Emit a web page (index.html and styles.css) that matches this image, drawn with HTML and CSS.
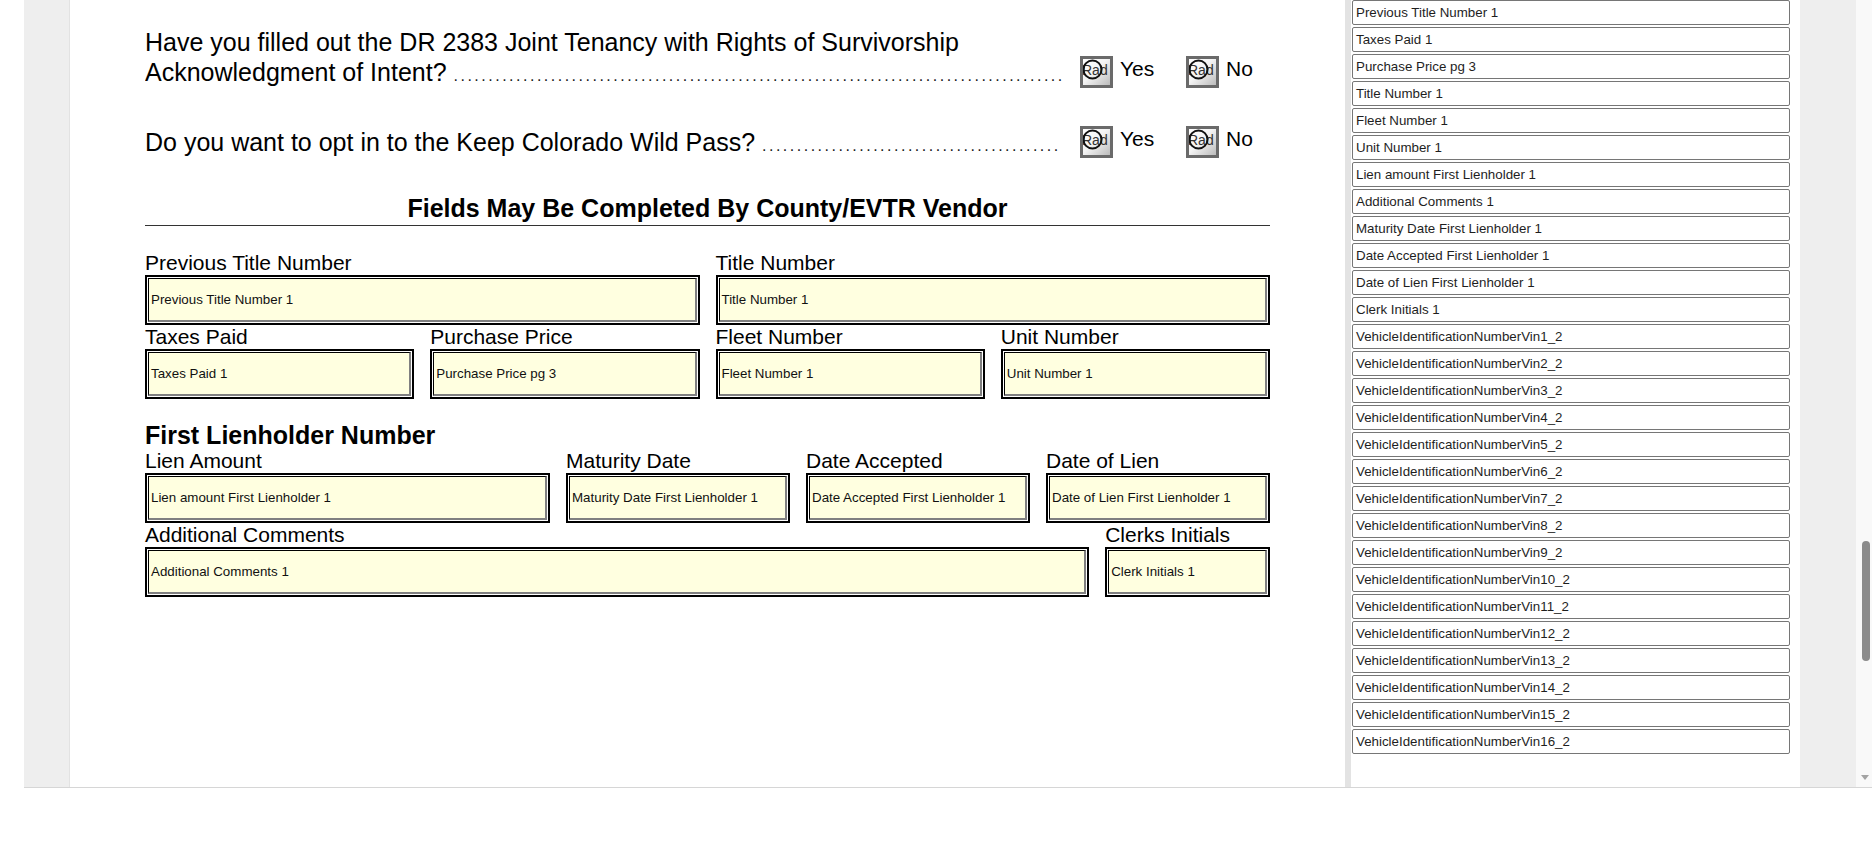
FILE: index.html
```html
<!DOCTYPE html>
<html>
<head>
<meta charset="utf-8">
<title>DR 2395 form</title>
<link rel="stylesheet" href="styles.css">
</head>
<body>
<div class="viewer">
  <div class="gutter-left"></div>
  <main class="page">
    <div class="question">
      <div class="q-text">
        <div class="q-line">Have you filled out the DR 2383 Joint Tenancy with Rights of Survivorship</div>
        <div class="q-line">Acknowledgment of Intent? <span class="dots">........................................................................................</span></div>
      </div>
      <div class="radios">
        <div class="opt"><div class="radio"><svg class="radio-ring" width="26" height="26" viewBox="0 0 26 26"><circle cx="9.5" cy="10.5" r="9" fill="none" stroke="#111" stroke-width="2"/></svg><span class="rad">Rad</span></div><span class="opt-label">Yes</span></div>
        <div class="opt"><div class="radio"><svg class="radio-ring" width="26" height="26" viewBox="0 0 26 26"><circle cx="9.5" cy="10.5" r="9" fill="none" stroke="#111" stroke-width="2"/></svg><span class="rad">Rad</span></div><span class="opt-label">No</span></div>
      </div>
    </div>

    <div class="question q2">
      <div class="q-text">
        <div class="q-line">Do you want to opt in to the Keep Colorado Wild Pass? <span class="dots">...........................................</span></div>
      </div>
      <div class="radios">
        <div class="opt"><div class="radio"><svg class="radio-ring" width="26" height="26" viewBox="0 0 26 26"><circle cx="9.5" cy="10.5" r="9" fill="none" stroke="#111" stroke-width="2"/></svg><span class="rad">Rad</span></div><span class="opt-label">Yes</span></div>
        <div class="opt"><div class="radio"><svg class="radio-ring" width="26" height="26" viewBox="0 0 26 26"><circle cx="9.5" cy="10.5" r="9" fill="none" stroke="#111" stroke-width="2"/></svg><span class="rad">Rad</span></div><span class="opt-label">No</span></div>
      </div>
    </div>

    <h2 class="section-title">Fields May Be Completed By County/EVTR Vendor</h2>

    <div class="row row-first grid-4">
      <div class="fld span-2"><div class="lbl">Previous Title Number</div><div class="box"><div class="box-in">Previous Title Number 1</div></div></div>
      <div class="fld span-2"><div class="lbl">Title Number</div><div class="box"><div class="box-in">Title Number 1</div></div></div>
    </div>
    <div class="row grid-4">
      <div class="fld"><div class="lbl">Taxes Paid</div><div class="box"><div class="box-in">Taxes Paid 1</div></div></div>
      <div class="fld"><div class="lbl">Purchase Price</div><div class="box"><div class="box-in">Purchase Price pg 3</div></div></div>
      <div class="fld"><div class="lbl">Fleet Number</div><div class="box"><div class="box-in">Fleet Number 1</div></div></div>
      <div class="fld"><div class="lbl">Unit Number</div><div class="box"><div class="box-in">Unit Number 1</div></div></div>
    </div>

    <h3 class="sub-title">First Lienholder Number</h3>
    <div class="row grid-lien">
      <div class="fld"><div class="lbl">Lien Amount</div><div class="box"><div class="box-in">Lien amount First Lienholder 1</div></div></div>
      <div class="fld"><div class="lbl">Maturity Date</div><div class="box"><div class="box-in">Maturity Date First Lienholder 1</div></div></div>
      <div class="fld"><div class="lbl">Date Accepted</div><div class="box"><div class="box-in">Date Accepted First Lienholder 1</div></div></div>
      <div class="fld"><div class="lbl">Date of Lien</div><div class="box"><div class="box-in">Date of Lien First Lienholder 1</div></div></div>
    </div>
    <div class="row grid-comments">
      <div class="fld"><div class="lbl">Additional Comments</div><div class="box"><div class="box-in">Additional Comments 1</div></div></div>
      <div class="fld"><div class="lbl">Clerks Initials</div><div class="box"><div class="box-in">Clerk Initials 1</div></div></div>
    </div>
  </main>

  <aside class="sidebar">
    <div class="item">Previous Title Number 1</div>
    <div class="item">Taxes Paid 1</div>
    <div class="item">Purchase Price pg 3</div>
    <div class="item">Title Number 1</div>
    <div class="item">Fleet Number 1</div>
    <div class="item">Unit Number 1</div>
    <div class="item">Lien amount First Lienholder 1</div>
    <div class="item">Additional Comments 1</div>
    <div class="item">Maturity Date First Lienholder 1</div>
    <div class="item">Date Accepted First Lienholder 1</div>
    <div class="item">Date of Lien First Lienholder 1</div>
    <div class="item">Clerk Initials 1</div>
    <div class="item">VehicleIdentificationNumberVin1_2</div>
    <div class="item">VehicleIdentificationNumberVin2_2</div>
    <div class="item">VehicleIdentificationNumberVin3_2</div>
    <div class="item">VehicleIdentificationNumberVin4_2</div>
    <div class="item">VehicleIdentificationNumberVin5_2</div>
    <div class="item">VehicleIdentificationNumberVin6_2</div>
    <div class="item">VehicleIdentificationNumberVin7_2</div>
    <div class="item">VehicleIdentificationNumberVin8_2</div>
    <div class="item">VehicleIdentificationNumberVin9_2</div>
    <div class="item">VehicleIdentificationNumberVin10_2</div>
    <div class="item">VehicleIdentificationNumberVin11_2</div>
    <div class="item">VehicleIdentificationNumberVin12_2</div>
    <div class="item">VehicleIdentificationNumberVin13_2</div>
    <div class="item">VehicleIdentificationNumberVin14_2</div>
    <div class="item">VehicleIdentificationNumberVin15_2</div>
    <div class="item">VehicleIdentificationNumberVin16_2</div>
  </aside>

  <div class="gutter-right"></div>

  <div class="scrollbar">
    <div class="thumb"></div>
    <div class="arrow-down"></div>
  </div>
</div>
</body>
</html>
```

FILE: styles.css
```css
html, body {
  margin: 0;
  padding: 0;
  background: #ffffff;
}

body {
  font-family: "Liberation Sans", Arial, sans-serif;
  color: #000;
  overflow: hidden;
}

.viewer {
  display: flex;
  margin-left: 24px;
  height: 787px;
  border-bottom: 1px solid #d6d6d6;
  overflow: hidden;
}

.gutter-left {
  width: 45px;
  flex: none;
  background: #eeeeee;
  border-right: 1px solid #e2e2e2;
}

.page {
  width: 1125px;
  flex: none;
  background: #fff;
  padding: 27px 75px 0 75px;
}

/* Questions */
.question {
  display: flex;
  align-items: flex-end;
}

.q2 {
  margin-top: 39px;
}

.q-text {
  width: 923px;
  flex: none;
}

.q-line {
  height: 30px;
  font-size: 25px;
  line-height: 30px;
  white-space: nowrap;
  overflow: hidden;
}

.dots {
  font-size: 16px;
  line-height: 16px;
  letter-spacing: 2.5px;
  color: #1a1a1a;
}

.radios {
  display: flex;
  margin-left: 12px;
  margin-bottom: -1px;
}

.opt {
  display: flex;
  align-items: center;
  width: 106px;
}

.opt:last-child {
  width: auto;
}

.radio {
  position: relative;
  width: 33px;
  height: 32px;
  box-sizing: border-box;
  border: 3px solid #6a6a6a;
  background: linear-gradient(135deg, #ffffff 0%, #f4f4f4 45%, #bcbcbc 100%);
  overflow: hidden;
  flex: none;
}

.radio-ring {
  position: absolute;
  left: 0;
  top: 0;
}

.rad {
  display: block;
  font-size: 14px;
  line-height: 14px;
  color: #333;
  padding-top: 4px;
  margin-left: -1px;
  white-space: nowrap;
}

.opt-label {
  font-size: 21px;
  line-height: 24px;
  margin-left: 7px;
  margin-top: -6px;
}

/* Headings */
.section-title {
  margin: 36px 0 0 0;
  padding-bottom: 2px;
  font-size: 25px;
  line-height: 30px;
  font-weight: bold;
  text-align: center;
  border-bottom: 1px solid #333;
}

.sub-title {
  margin: 22px 0 0 0;
  font-size: 25px;
  line-height: 28px;
  font-weight: bold;
}

/* Field rows */
.row {
  display: grid;
  column-gap: 16px;
}

.row-first {
  margin-top: 25px;
}

.grid-4 {
  grid-template-columns: repeat(4, 1fr);
}

.span-2 {
  grid-column: span 2;
}

.grid-lien {
  grid-template-columns: 405fr 224fr 224fr 224fr;
}

.grid-comments {
  grid-template-columns: 945fr 165fr;
}

.lbl {
  font-size: 21px;
  line-height: 24px;
  white-space: nowrap;
}

.box {
  height: 50px;
  box-sizing: border-box;
  border: 2px solid #000;
  padding: 1px;
  background: #fff;
}

.box-in {
  height: 100%;
  box-sizing: border-box;
  border-style: solid;
  border-width: 1px 2px 2px 1px;
  border-color: #000 #808080 #808080 #000;
  background: #ffffe0;
  font-size: 13.33px;
  color: #111;
  display: flex;
  align-items: center;
  padding-left: 2px;
  white-space: nowrap;
  overflow: hidden;
}

/* Sidebar */
.sidebar {
  width: 438px;
  flex: none;
  border-left: 6px solid #e3e3e3;
  padding: 0 10px 0 1px;
  background: #fff;
}

.item {
  height: 25px;
  box-sizing: border-box;
  border: 1px solid #767676;
  border-radius: 2px;
  margin-bottom: 2px;
  padding-left: 3px;
  font-size: 13.33px;
  line-height: 23px;
  color: #1e1e1e;
  white-space: nowrap;
  overflow: hidden;
}

.gutter-right {
  width: 56px;
  flex: none;
  background: #eeeeee;
}

.scrollbar {
  width: 16px;
  flex: none;
  background: #f9f9f9;
  display: flex;
  flex-direction: column;
  align-items: center;
}

.thumb {
  width: 8px;
  height: 120px;
  margin-top: 541px;
  margin-left: 3px;
  border-radius: 4px;
  background: #8b8b8b;
}

.arrow-down {
  margin-top: auto;
  margin-bottom: 7px;
  margin-left: 1px;
  width: 0;
  height: 0;
  border-left: 4px solid transparent;
  border-right: 4px solid transparent;
  border-top: 5px solid #a3a3a3;
}
```
